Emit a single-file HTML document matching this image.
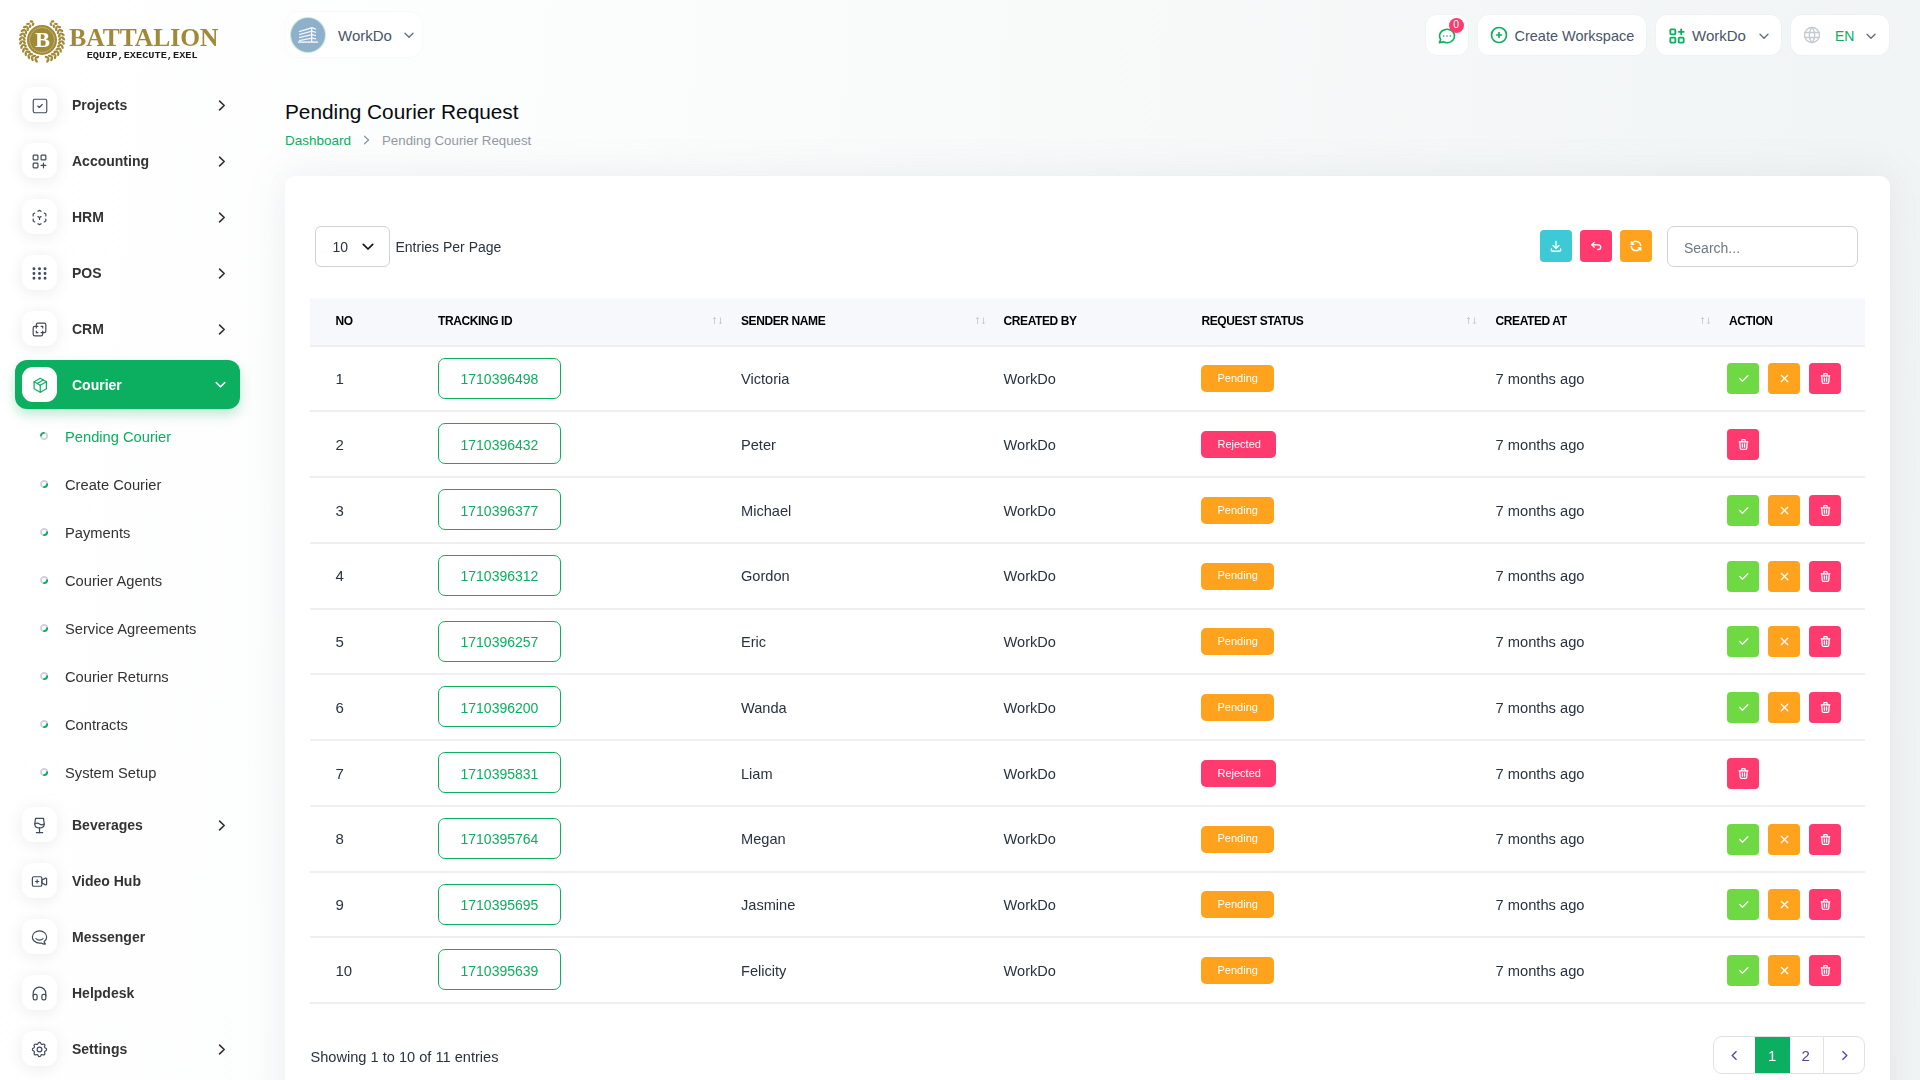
<!DOCTYPE html>
<html><head><meta charset="utf-8">
<style>
*{box-sizing:border-box;margin:0;padding:0}
html,body{width:1920px;height:1080px;overflow:hidden}
body{font-family:"Liberation Sans",sans-serif;color:#293240;background:linear-gradient(95deg,#ffffff 0%,#f9fbfb 45%,#f1f4f4 100%);position:relative}
.tx{position:absolute;white-space:nowrap;line-height:1}
.ic{position:absolute;overflow:visible}
.bx{position:absolute}
.nb{position:absolute;left:22px;width:35px;height:35px;border-radius:11px;background:#fff;box-shadow:0 2px 16px rgba(0,0,0,0.08)}
.nt{font-weight:bold;color:#333}
.st{color:#333}
.bul{position:absolute;left:40px;width:8px;height:8px;border-radius:50%;border:2px solid #cdd2db}
.hb{position:absolute;background:#fff;border-radius:11px;box-shadow:0 0 0 0.8px rgba(0,0,0,0.025)}
.rowl{position:absolute;left:310px;width:1555px;height:2px;background:#efefef}
.tid{position:absolute;left:438px;width:123px;height:41px;border:1.4px solid #0caf60;border-radius:7px}
.bdg{position:absolute;left:1201px;height:27px;border-radius:5px}
.ab{position:absolute;width:32px;height:31px;border-radius:4px}
.cg{background:#6fd943}.co{background:#ffa21d}.cr{background:#ff3a6e}.cc{background:#3ec9d6}
</style></head><body>
<div style="position:absolute;left:0;top:0;width:284px;height:1080px;will-change:transform">
<svg class="ic" style="left:0px;top:0px;width:240px;height:80px" viewBox="0 0 240 80"><g fill="#a08a37"><ellipse cx="36.13" cy="60.47" rx="2.50" ry="1.2" transform="rotate(236.0 36.13 60.47)"/><ellipse cx="37.01" cy="57.40" rx="2.50" ry="1.2" transform="rotate(156.0 37.01 57.40)"/><ellipse cx="32.26" cy="58.94" rx="2.50" ry="1.2" transform="rotate(247.2 32.26 58.94)"/><ellipse cx="33.73" cy="56.10" rx="2.50" ry="1.2" transform="rotate(167.2 33.73 56.10)"/><ellipse cx="28.77" cy="56.69" rx="2.50" ry="1.2" transform="rotate(258.4 28.77 56.69)"/><ellipse cx="30.76" cy="54.18" rx="2.50" ry="1.2" transform="rotate(178.4 30.76 54.18)"/><ellipse cx="25.78" cy="53.80" rx="2.50" ry="1.2" transform="rotate(269.6 25.78 53.80)"/><ellipse cx="28.22" cy="51.73" rx="2.50" ry="1.2" transform="rotate(189.6 28.22 51.73)"/><ellipse cx="23.41" cy="50.39" rx="2.50" ry="1.2" transform="rotate(280.8 23.41 50.39)"/><ellipse cx="26.20" cy="48.83" rx="2.50" ry="1.2" transform="rotate(200.8 26.20 48.83)"/><ellipse cx="21.74" cy="46.58" rx="2.50" ry="1.2" transform="rotate(292.0 21.74 46.58)"/><ellipse cx="24.79" cy="45.59" rx="2.50" ry="1.2" transform="rotate(212.0 24.79 45.59)"/><ellipse cx="20.85" cy="42.52" rx="2.50" ry="1.2" transform="rotate(303.2 20.85 42.52)"/><ellipse cx="24.03" cy="42.14" rx="2.50" ry="1.2" transform="rotate(223.2 24.03 42.14)"/><ellipse cx="20.76" cy="38.37" rx="2.50" ry="1.2" transform="rotate(314.4 20.76 38.37)"/><ellipse cx="23.95" cy="38.61" rx="2.50" ry="1.2" transform="rotate(234.4 23.95 38.61)"/><ellipse cx="21.48" cy="34.27" rx="2.50" ry="1.2" transform="rotate(325.6 21.48 34.27)"/><ellipse cx="24.57" cy="35.13" rx="2.50" ry="1.2" transform="rotate(245.6 24.57 35.13)"/><ellipse cx="22.99" cy="30.40" rx="2.50" ry="1.2" transform="rotate(336.8 22.99 30.40)"/><ellipse cx="25.84" cy="31.84" rx="2.50" ry="1.2" transform="rotate(256.8 25.84 31.84)"/><ellipse cx="25.22" cy="26.89" rx="2.50" ry="1.2" transform="rotate(348.0 25.22 26.89)"/><ellipse cx="27.74" cy="28.86" rx="2.50" ry="1.2" transform="rotate(268.0 27.74 28.86)"/><ellipse cx="28.08" cy="23.88" rx="1.90" ry="1.2" transform="rotate(359.2 28.08 23.88)"/><ellipse cx="30.17" cy="26.30" rx="1.90" ry="1.2" transform="rotate(279.2 30.17 26.30)"/><ellipse cx="31.48" cy="21.48" rx="1.90" ry="1.2" transform="rotate(370.4 31.48 21.48)"/><ellipse cx="33.06" cy="24.26" rx="1.90" ry="1.2" transform="rotate(290.4 33.06 24.26)"/><ellipse cx="47.87" cy="60.47" rx="2.50" ry="1.2" transform="rotate(-56.0 47.87 60.47)"/><ellipse cx="46.99" cy="57.40" rx="2.50" ry="1.2" transform="rotate(24.0 46.99 57.40)"/><ellipse cx="51.74" cy="58.94" rx="2.50" ry="1.2" transform="rotate(-67.2 51.74 58.94)"/><ellipse cx="50.27" cy="56.10" rx="2.50" ry="1.2" transform="rotate(12.8 50.27 56.10)"/><ellipse cx="55.23" cy="56.69" rx="2.50" ry="1.2" transform="rotate(-78.4 55.23 56.69)"/><ellipse cx="53.24" cy="54.18" rx="2.50" ry="1.2" transform="rotate(1.6 53.24 54.18)"/><ellipse cx="58.22" cy="53.80" rx="2.50" ry="1.2" transform="rotate(-89.6 58.22 53.80)"/><ellipse cx="55.78" cy="51.73" rx="2.50" ry="1.2" transform="rotate(-9.6 55.78 51.73)"/><ellipse cx="60.59" cy="50.39" rx="2.50" ry="1.2" transform="rotate(-100.8 60.59 50.39)"/><ellipse cx="57.80" cy="48.83" rx="2.50" ry="1.2" transform="rotate(-20.8 57.80 48.83)"/><ellipse cx="62.26" cy="46.58" rx="2.50" ry="1.2" transform="rotate(-112.0 62.26 46.58)"/><ellipse cx="59.21" cy="45.59" rx="2.50" ry="1.2" transform="rotate(-32.0 59.21 45.59)"/><ellipse cx="63.15" cy="42.52" rx="2.50" ry="1.2" transform="rotate(-123.2 63.15 42.52)"/><ellipse cx="59.97" cy="42.14" rx="2.50" ry="1.2" transform="rotate(-43.2 59.97 42.14)"/><ellipse cx="63.24" cy="38.37" rx="2.50" ry="1.2" transform="rotate(-134.4 63.24 38.37)"/><ellipse cx="60.05" cy="38.61" rx="2.50" ry="1.2" transform="rotate(-54.4 60.05 38.61)"/><ellipse cx="62.52" cy="34.27" rx="2.50" ry="1.2" transform="rotate(-145.6 62.52 34.27)"/><ellipse cx="59.43" cy="35.13" rx="2.50" ry="1.2" transform="rotate(-65.6 59.43 35.13)"/><ellipse cx="61.01" cy="30.40" rx="2.50" ry="1.2" transform="rotate(-156.8 61.01 30.40)"/><ellipse cx="58.16" cy="31.84" rx="2.50" ry="1.2" transform="rotate(-76.8 58.16 31.84)"/><ellipse cx="58.78" cy="26.89" rx="2.50" ry="1.2" transform="rotate(-168.0 58.78 26.89)"/><ellipse cx="56.26" cy="28.86" rx="2.50" ry="1.2" transform="rotate(-88.0 56.26 28.86)"/><ellipse cx="55.92" cy="23.88" rx="1.90" ry="1.2" transform="rotate(-179.2 55.92 23.88)"/><ellipse cx="53.83" cy="26.30" rx="1.90" ry="1.2" transform="rotate(-99.2 53.83 26.30)"/><ellipse cx="52.52" cy="21.48" rx="1.90" ry="1.2" transform="rotate(-190.4 52.52 21.48)"/><ellipse cx="50.94" cy="24.26" rx="1.90" ry="1.2" transform="rotate(-110.4 50.94 24.26)"/></g><circle cx="42" cy="40" r="15" fill="#a08a37"/><circle cx="42" cy="40" r="12.4" fill="none" stroke="#efe6c8" stroke-width="0.6" stroke-dasharray="1.6 0.6"/><text x="42.6" y="46.6" font-family="Liberation Serif" font-weight="bold" font-size="20.5" fill="#fff" text-anchor="middle" textLength="15" lengthAdjust="spacingAndGlyphs">B</text><text x="69.2" y="45.9" font-family="Liberation Serif" font-weight="bold" font-size="25.5" fill="#a08a37" textLength="149.3" lengthAdjust="spacingAndGlyphs">BATTALION</text><text x="86.7" y="58.2" font-family="Liberation Mono" font-weight="bold" font-size="9.6" fill="#1c1c1c" textLength="111" lengthAdjust="spacingAndGlyphs">EQUIP,EXECUTE,EXEL</text></svg>
<div class="nb" style="top:86.75px"></div>
<svg class="ic" style="left:30.700000000000003px;top:96.5px;width:18px;height:18px;" viewBox="0 0 24 24" fill="none" stroke="#3f4a5a" stroke-width="1.5" stroke-linecap="round" stroke-linejoin="round"><path d="M3 5a2 2 0 0 1 2 -2h14a2 2 0 0 1 2 2v14a2 2 0 0 1 -2 2h-14a2 2 0 0 1 -2 -2v-14z"/><path d="M9 12l2 2l4 -4"/></svg>
<div class="tx nt" style="left:72px;top:97.65px;font-size:14px;">Projects</div>
<svg class="ic" style="left:218px;top:99.7px;width:8px;height:11px" viewBox="0 0 8 11"><path d="M1.6 1.2l4.6 4.3-4.6 4.3" fill="none" stroke="#333" stroke-width="1.7" stroke-linecap="round" stroke-linejoin="round"/></svg>
<div class="nb" style="top:142.75px"></div>
<svg class="ic" style="left:30.200000000000003px;top:152.0px;width:19px;height:19px;" viewBox="0 0 24 24" fill="none" stroke="#3f4a5a" stroke-width="1.5" stroke-linecap="round" stroke-linejoin="round"><path d="M5 4h4a1 1 0 0 1 1 1v4a1 1 0 0 1 -1 1h-4a1 1 0 0 1 -1 -1v-4a1 1 0 0 1 1 -1z"/><path d="M5 14h4a1 1 0 0 1 1 1v4a1 1 0 0 1 -1 1h-4a1 1 0 0 1 -1 -1v-4a1 1 0 0 1 1 -1z"/><path d="M15 4h4a1 1 0 0 1 1 1v4a1 1 0 0 1 -1 1h-4a1 1 0 0 1 -1 -1v-4a1 1 0 0 1 1 -1z"/><path d="M14 17h6"/><path d="M17 14v6"/></svg>
<div class="tx nt" style="left:72px;top:153.65px;font-size:14px;">Accounting</div>
<svg class="ic" style="left:218px;top:155.7px;width:8px;height:11px" viewBox="0 0 8 11"><path d="M1.6 1.2l4.6 4.3-4.6 4.3" fill="none" stroke="#333" stroke-width="1.7" stroke-linecap="round" stroke-linejoin="round"/></svg>
<div class="nb" style="top:198.75px"></div>
<svg class="ic" style="left:30.200000000000003px;top:208.0px;width:19px;height:19px;" viewBox="0 0 24 24" fill="none" stroke="#3f4a5a" stroke-width="1.5" stroke-linecap="round" stroke-linejoin="round"><path d="M6 17.6l-2 -1.1v-2.5"/><path d="M4 10v-2.5l2 -1.1"/><path d="M10 4.1l2 -1.1l2 1.1"/><path d="M18 6.4l2 1.1v2.5"/><path d="M20 14v2.5l-2 1.12"/><path d="M14 19.9l-2 1.1l-2 -1.1"/><path d="M12 12l2 -1.1"/><path d="M12 12l0 2.5"/><path d="M12 12l-2 -1.12"/></svg>
<div class="tx nt" style="left:72px;top:209.65px;font-size:14px;">HRM</div>
<svg class="ic" style="left:218px;top:211.7px;width:8px;height:11px" viewBox="0 0 8 11"><path d="M1.6 1.2l4.6 4.3-4.6 4.3" fill="none" stroke="#333" stroke-width="1.7" stroke-linecap="round" stroke-linejoin="round"/></svg>
<div class="nb" style="top:254.75px"></div>
<svg class="ic" style="left:30.200000000000003px;top:264.0px;width:19px;height:19px;" viewBox="0 0 24 24" fill="none" stroke="#3f4a5a" stroke-width="1.5" stroke-linecap="round" stroke-linejoin="round"><circle cx="5" cy="6" r="1.1" fill="#3f4a5a"/><circle cx="5" cy="12" r="1.1" fill="#3f4a5a"/><circle cx="5" cy="18" r="1.1" fill="#3f4a5a"/><circle cx="12" cy="6" r="1.1" fill="#3f4a5a"/><circle cx="12" cy="12" r="1.1" fill="#3f4a5a"/><circle cx="12" cy="18" r="1.1" fill="#3f4a5a"/><circle cx="19" cy="6" r="1.1" fill="#3f4a5a"/><circle cx="19" cy="12" r="1.1" fill="#3f4a5a"/><circle cx="19" cy="18" r="1.1" fill="#3f4a5a"/></svg>
<div class="tx nt" style="left:72px;top:265.65px;font-size:14px;">POS</div>
<svg class="ic" style="left:218px;top:267.7px;width:8px;height:11px" viewBox="0 0 8 11"><path d="M1.6 1.2l4.6 4.3-4.6 4.3" fill="none" stroke="#333" stroke-width="1.7" stroke-linecap="round" stroke-linejoin="round"/></svg>
<div class="nb" style="top:310.75px"></div>
<svg class="ic" style="left:30.200000000000003px;top:320.0px;width:19px;height:19px;" viewBox="0 0 24 24" fill="none" stroke="#3f4a5a" stroke-width="1.5" stroke-linecap="round" stroke-linejoin="round"><path d="M16 16v2a2 2 0 0 1 -2 2h-8a2 2 0 0 1 -2 -2v-8a2 2 0 0 1 2 -2h2v-2a2 2 0 0 1 2 -2h8a2 2 0 0 1 2 2v8a2 2 0 0 1 -2 2h-2"/><path d="M10 8l-2 0l0 2"/><path d="M8 14l0 2l2 0"/><path d="M14 8l2 0l0 2"/><path d="M16 14l0 2l-2 0"/></svg>
<div class="tx nt" style="left:72px;top:321.65px;font-size:14px;">CRM</div>
<svg class="ic" style="left:218px;top:323.7px;width:8px;height:11px" viewBox="0 0 8 11"><path d="M1.6 1.2l4.6 4.3-4.6 4.3" fill="none" stroke="#333" stroke-width="1.7" stroke-linecap="round" stroke-linejoin="round"/></svg>
<div class="bx" style="left:15px;top:360px;width:225px;height:49px;border-radius:12px;background:#0caf60;box-shadow:0 6px 12px rgba(12,175,96,0.25)"></div>
<div class="nb" style="top:367px;box-shadow:none"></div>
<svg class="ic" style="left:30.5px;top:376px;width:18.5px;height:18.5px;" viewBox="0 0 24 24" fill="none" stroke="#0caf60" stroke-width="1.6" stroke-linecap="round" stroke-linejoin="round"><path d="M12 3l8 4.5l0 9l-8 4.5l-8 -4.5l0 -9l8 -4.5"/><path d="M12 12l8 -4.5"/><path d="M12 12l0 9"/><path d="M12 12l-8 -4.5"/><path d="M16 5.25l-8 4.5"/></svg>
<div class="tx nt" style="left:72px;top:377.75px;font-size:14px;color:#fff">Courier</div>
<svg class="ic" style="left:215px;top:381px;width:11px;height:8px" viewBox="0 0 11 8"><path d="M1.2 1.5l4.3 4.3 4.3-4.3" fill="none" stroke="#fff" stroke-width="1.6" stroke-linecap="round" stroke-linejoin="round"/></svg>
<svg class="ic" style="left:39px;top:431px;width:10px;height:10px" viewBox="0 0 10 10"><circle cx="5" cy="5" r="3.1" fill="none" stroke="#cdd1da" stroke-width="1.8"/><path d="M1.95 4.46A3.1 3.1 0 0 1 4.89 1.90" fill="none" stroke="#0caf60" stroke-width="1.9" stroke-linecap="round"/></svg>
<div class="tx st" style="left:65px;top:429.66px;font-size:14.7px;color:#0caf60">Pending Courier</div>
<svg class="ic" style="left:39px;top:479px;width:10px;height:10px" viewBox="0 0 10 10"><circle cx="5" cy="5" r="3.1" fill="none" stroke="#cdd1da" stroke-width="1.8"/><path d="M8.10 5.11A3.1 3.1 0 0 1 5.11 8.10" fill="none" stroke="#0caf60" stroke-width="1.9" stroke-linecap="round"/></svg>
<div class="tx st" style="left:65px;top:477.66px;font-size:14.7px;">Create Courier</div>
<svg class="ic" style="left:39px;top:527px;width:10px;height:10px" viewBox="0 0 10 10"><circle cx="5" cy="5" r="3.1" fill="none" stroke="#cdd1da" stroke-width="1.8"/><path d="M8.10 5.11A3.1 3.1 0 0 1 5.11 8.10" fill="none" stroke="#0caf60" stroke-width="1.9" stroke-linecap="round"/></svg>
<div class="tx st" style="left:65px;top:525.66px;font-size:14.7px;">Payments</div>
<svg class="ic" style="left:39px;top:575px;width:10px;height:10px" viewBox="0 0 10 10"><circle cx="5" cy="5" r="3.1" fill="none" stroke="#cdd1da" stroke-width="1.8"/><path d="M8.10 5.11A3.1 3.1 0 0 1 5.11 8.10" fill="none" stroke="#0caf60" stroke-width="1.9" stroke-linecap="round"/></svg>
<div class="tx st" style="left:65px;top:573.66px;font-size:14.7px;">Courier Agents</div>
<svg class="ic" style="left:39px;top:623px;width:10px;height:10px" viewBox="0 0 10 10"><circle cx="5" cy="5" r="3.1" fill="none" stroke="#cdd1da" stroke-width="1.8"/><path d="M8.10 5.11A3.1 3.1 0 0 1 5.11 8.10" fill="none" stroke="#0caf60" stroke-width="1.9" stroke-linecap="round"/></svg>
<div class="tx st" style="left:65px;top:621.66px;font-size:14.7px;">Service Agreements</div>
<svg class="ic" style="left:39px;top:671px;width:10px;height:10px" viewBox="0 0 10 10"><circle cx="5" cy="5" r="3.1" fill="none" stroke="#cdd1da" stroke-width="1.8"/><path d="M8.10 5.11A3.1 3.1 0 0 1 5.11 8.10" fill="none" stroke="#0caf60" stroke-width="1.9" stroke-linecap="round"/></svg>
<div class="tx st" style="left:65px;top:669.66px;font-size:14.7px;">Courier Returns</div>
<svg class="ic" style="left:39px;top:719px;width:10px;height:10px" viewBox="0 0 10 10"><circle cx="5" cy="5" r="3.1" fill="none" stroke="#cdd1da" stroke-width="1.8"/><path d="M8.10 5.11A3.1 3.1 0 0 1 5.11 8.10" fill="none" stroke="#0caf60" stroke-width="1.9" stroke-linecap="round"/></svg>
<div class="tx st" style="left:65px;top:717.66px;font-size:14.7px;">Contracts</div>
<svg class="ic" style="left:39px;top:767px;width:10px;height:10px" viewBox="0 0 10 10"><circle cx="5" cy="5" r="3.1" fill="none" stroke="#cdd1da" stroke-width="1.8"/><path d="M8.10 5.11A3.1 3.1 0 0 1 5.11 8.10" fill="none" stroke="#0caf60" stroke-width="1.9" stroke-linecap="round"/></svg>
<div class="tx st" style="left:65px;top:765.66px;font-size:14.7px;">System Setup</div>
<div class="nb" style="top:806.75px"></div>
<svg class="ic" style="left:30.200000000000003px;top:816.0px;width:19px;height:19px;" viewBox="0 0 24 24" fill="none" stroke="#3f4a5a" stroke-width="1.5" stroke-linecap="round" stroke-linejoin="round"><path d="M8 21l8 0"/><path d="M12 15l0 6"/><path d="M17 3l1 7c0 3.012 -2.686 5 -6 5s-6 -1.988 -6 -5l1 -7h10z"/><path d="M6 10a5 5 0 0 1 6 0a5 5 0 0 0 6 0"/></svg>
<div class="tx nt" style="left:72px;top:817.65px;font-size:14px;">Beverages</div>
<svg class="ic" style="left:218px;top:819.7px;width:8px;height:11px" viewBox="0 0 8 11"><path d="M1.6 1.2l4.6 4.3-4.6 4.3" fill="none" stroke="#333" stroke-width="1.7" stroke-linecap="round" stroke-linejoin="round"/></svg>
<div class="nb" style="top:862.75px"></div>
<svg class="ic" style="left:30.200000000000003px;top:872.0px;width:19px;height:19px;" viewBox="0 0 24 24" fill="none" stroke="#3f4a5a" stroke-width="1.5" stroke-linecap="round" stroke-linejoin="round"><path d="M15 10l4.553 -2.276a1 1 0 0 1 1.447 .894v6.764a1 1 0 0 1 -1.447 .894l-4.553 -2.276v-4z"/><path d="M5 6h8a2 2 0 0 1 2 2v8a2 2 0 0 1 -2 2h-8a2 2 0 0 1 -2 -2v-8a2 2 0 0 1 2 -2z"/><path d="M7 12l4 0"/><path d="M9 10l0 4"/></svg>
<div class="tx nt" style="left:72px;top:873.65px;font-size:14px;">Video Hub</div>
<div class="nb" style="top:918.75px"></div>
<svg class="ic" style="left:30.200000000000003px;top:928.0px;width:19px;height:19px;" viewBox="0 0 24 24" fill="none" stroke="#3f4a5a" stroke-width="1.5" stroke-linecap="round" stroke-linejoin="round"><path d="M17.802 17.292s.077 -.055 .2 -.149c1.843 -1.425 3 -3.49 3 -5.789c0 -4.286 -4.03 -7.764 -9 -7.764c-4.97 0 -9 3.478 -9 7.764c0 4.288 4.03 7.646 9 7.646c.424 0 1.12 -.028 2.088 -.084c1.262 .82 3.104 1.493 4.716 1.493c.499 0 .734 -.41 .414 -.828c-.486 -.596 -1.156 -1.551 -1.416 -2.29z"/><path d="M7.5 13.5c2.5 2.5 6.5 2.5 9 0"/></svg>
<div class="tx nt" style="left:72px;top:929.65px;font-size:14px;">Messenger</div>
<div class="nb" style="top:974.75px"></div>
<svg class="ic" style="left:30.200000000000003px;top:984.0px;width:19px;height:19px;" viewBox="0 0 24 24" fill="none" stroke="#3f4a5a" stroke-width="1.5" stroke-linecap="round" stroke-linejoin="round"><path d="M6 13h1a2 2 0 0 1 2 2v3a2 2 0 0 1 -2 2h-1a2 2 0 0 1 -2 -2v-3a2 2 0 0 1 2 -2z"/><path d="M17 13h1a2 2 0 0 1 2 2v3a2 2 0 0 1 -2 2h-1a2 2 0 0 1 -2 -2v-3a2 2 0 0 1 2 -2z"/><path d="M4 15v-3a8 8 0 0 1 16 0v3"/></svg>
<div class="tx nt" style="left:72px;top:985.65px;font-size:14px;">Helpdesk</div>
<div class="nb" style="top:1030.75px"></div>
<svg class="ic" style="left:30.200000000000003px;top:1040.0px;width:19px;height:19px;" viewBox="0 0 24 24" fill="none" stroke="#3f4a5a" stroke-width="1.5" stroke-linecap="round" stroke-linejoin="round"><path d="M10.325 4.317c.426 -1.756 2.924 -1.756 3.35 0a1.724 1.724 0 0 0 2.573 1.066c1.543 -.94 3.31 .826 2.37 2.37a1.724 1.724 0 0 0 1.065 2.572c1.756 .426 1.756 2.924 0 3.35a1.724 1.724 0 0 0 -1.066 2.573c.94 1.543 -.826 3.31 -2.37 2.37a1.724 1.724 0 0 0 -2.572 1.065c-.426 1.756 -2.924 1.756 -3.35 0a1.724 1.724 0 0 0 -2.573 -1.066c-1.543 .94 -3.31 -.826 -2.37 -2.37a1.724 1.724 0 0 0 -1.065 -2.572c-1.756 -.426 -1.756 -2.924 0 -3.35a1.724 1.724 0 0 0 1.066 -2.573c-.94 -1.543 .826 -3.31 2.37 -2.37c1 .608 2.296 .07 2.572 -1.065z"/><path d="M9 12a3 3 0 1 0 6 0a3 3 0 0 0 -6 0"/></svg>
<div class="tx nt" style="left:72px;top:1041.65px;font-size:14px;">Settings</div>
<svg class="ic" style="left:218px;top:1043.7px;width:8px;height:11px" viewBox="0 0 8 11"><path d="M1.6 1.2l4.6 4.3-4.6 4.3" fill="none" stroke="#333" stroke-width="1.7" stroke-linecap="round" stroke-linejoin="round"/></svg>
</div>
<div class="hb" style="left:285.5px;top:12.4px;width:136px;height:45px;border-radius:12px"></div>
<div class="bx" style="left:291px;top:18px;width:34px;height:34px;border-radius:50%;background:#8eb0cb;box-shadow:0 0 0 1px #cdebd9"></div>
<svg class="ic" style="left:297px;top:25px;width:22px;height:19px" viewBox="0 0 22 19"><g fill="#f4f7fa"><path d="M2 6l13-4 4 1.5v1.2l-4-1.2-13 3.8z"/><path d="M2 9l13-3.5 4 1.2v1.2l-4-1.1-13 3.4z"/><path d="M2 12l13-3 4 1v1.2l-4-0.9-13 2.9z"/><path d="M2 15l13-2.5 4 0.8v1.2l-4-0.7-13 2.4z"/><rect x="14" y="3" width="1.3" height="14"/><rect x="1" y="16.4" width="20" height="1.4"/></g></svg>
<div class="tx " style="left:338px;top:28.10px;font-size:15px;color:#4a5568">WorkDo</div>
<svg class="ic" style="left:404px;top:32px;width:10px;height:7px" viewBox="0 0 10 7"><path d="M1 1.3l4 4 4-4" fill="none" stroke="#5f6b7a" stroke-width="1.3" stroke-linecap="round" stroke-linejoin="round"/></svg>
<div class="hb" style="left:1426px;top:15px;width:42px;height:40px"></div>
<svg class="ic" style="left:1437px;top:26px;width:20px;height:20px" viewBox="0 0 24 24" fill="none" stroke="#0caf60" stroke-width="2" stroke-linecap="round" stroke-linejoin="round"><path d="M3 20l1.3 -3.9c-2.324 -3.437 -1.426 -7.872 2.1 -10.374c3.526 -2.501 8.59 -2.296 11.845 .48c3.255 2.777 3.695 7.266 1.029 10.501c-2.666 3.235 -7.615 4.215 -11.574 2.293l-4.7 1"/><path d="M12 12l0 .01"/><path d="M8 12l0 .01"/><path d="M16 12l0 .01"/></svg>
<div class="bx" style="left:1449px;top:17.5px;width:15px;height:15px;border-radius:50%;background:#ff3a6e"></div>
<div class="tx " style="left:1453.2px;top:19.11px;font-size:10.5px;color:#fff">0</div>
<div class="hb" style="left:1478px;top:15px;width:168px;height:40px"></div>
<svg class="ic" style="left:1489px;top:25px;width:20px;height:20px" viewBox="0 0 24 24" fill="none" stroke="#0caf60" stroke-width="2" stroke-linecap="round" stroke-linejoin="round"><path d="M3 12a9 9 0 1 0 18 0a9 9 0 0 0 -18 0"/><path d="M9 12h6"/><path d="M12 9v6"/></svg>
<div class="tx " style="left:1514.5px;top:29.23px;font-size:14.5px;color:#4a5568">Create Workspace</div>
<div class="hb" style="left:1656px;top:15px;width:125px;height:40px"></div>
<svg class="ic" style="left:1667px;top:26px;width:20px;height:20px" viewBox="0 0 24 24" fill="none" stroke="#0caf60" stroke-width="2.2" stroke-linecap="round" stroke-linejoin="round"><path d="M5 4h4a1 1 0 0 1 1 1v4a1 1 0 0 1 -1 1h-4a1 1 0 0 1 -1 -1v-4a1 1 0 0 1 1 -1z"/><path d="M5 14h4a1 1 0 0 1 1 1v4a1 1 0 0 1 -1 1h-4a1 1 0 0 1 -1 -1v-4a1 1 0 0 1 1 -1z"/><path d="M15 14h4a1 1 0 0 1 1 1v4a1 1 0 0 1 -1 1h-4a1 1 0 0 1 -1 -1v-4a1 1 0 0 1 1 -1z"/><path d="M14 7h6"/><path d="M17 4v6"/></svg>
<div class="tx " style="left:1692px;top:28.20px;font-size:15px;color:#4a5568">WorkDo</div>
<svg class="ic" style="left:1758.5px;top:32.5px;width:10px;height:7px" viewBox="0 0 10 7"><path d="M1 1.3l4 4 4-4" fill="none" stroke="#5f6b7a" stroke-width="1.3" stroke-linecap="round" stroke-linejoin="round"/></svg>
<div class="hb" style="left:1791px;top:15px;width:98px;height:40px"></div>
<svg class="ic" style="left:1801.5px;top:25px;width:20px;height:20px" viewBox="0 0 24 24" fill="none" stroke="#c5c9d0" stroke-width="1.6" stroke-linecap="round" stroke-linejoin="round"><path d="M3 12a9 9 0 1 0 18 0a9 9 0 0 0 -18 0"/><path d="M3.6 9h16.8"/><path d="M3.6 15h16.8"/><path d="M11.5 3a17 17 0 0 0 0 18"/><path d="M12.5 3a17 17 0 0 1 0 18"/></svg>
<div class="tx " style="left:1835px;top:28.65px;font-size:14px;color:#0caf60">EN</div>
<svg class="ic" style="left:1866px;top:32.5px;width:10px;height:7px" viewBox="0 0 10 7"><path d="M1 1.3l4 4 4-4" fill="none" stroke="#5f6b7a" stroke-width="1.3" stroke-linecap="round" stroke-linejoin="round"/></svg>
<div class="tx " style="left:285px;top:101.99px;font-size:20.8px;color:#060a10">Pending Courier Request</div>
<div class="tx " style="left:285px;top:133.97px;font-size:13.5px;color:#0caf60">Dashboard</div>
<svg class="ic" style="left:363px;top:135px;width:7px;height:10px" viewBox="0 0 7 10"><path d="M1.5 1.2l4 3.8-4 3.8" fill="none" stroke="#8a929c" stroke-width="1.2" stroke-linecap="round" stroke-linejoin="round"/></svg>
<div class="tx " style="left:382px;top:134.14px;font-size:13.3px;color:#949aa2">Pending Courier Request</div>
<div class="bx" style="left:285px;top:176px;width:1605px;height:1000px;background:#fff;border-radius:10px;box-shadow:0 0 40px rgba(120,130,150,0.13)"></div>
<div class="bx" style="left:315px;top:226px;width:75px;height:41px;border:1px solid #ced3da;border-radius:6px"></div>
<div class="tx " style="left:332.5px;top:240.15px;font-size:14px;color:#293240">10</div>
<svg class="ic" style="left:362px;top:242.5px;width:12px;height:8px" viewBox="0 0 12 8"><path d="M1.3 1.3l4.7 4.7 4.7-4.7" fill="none" stroke="#111" stroke-width="1.7" stroke-linecap="round" stroke-linejoin="round"/></svg>
<div class="tx " style="left:395.5px;top:240.15px;font-size:14px;color:#293240">Entries Per Page</div>
<div class="bx cc" style="left:1540px;top:230px;width:32px;height:32px;border-radius:4px"></div>
<svg class="ic" style="left:1549px;top:239px;width:14px;height:14px" viewBox="0 0 24 24" fill="none" stroke="#fff" stroke-width="2.4" stroke-linecap="round" stroke-linejoin="round"><path d="M4 17v2a2 2 0 0 0 2 2h12a2 2 0 0 0 2 -2v-2"/><path d="M7 11l5 5l5 -5"/><path d="M12 4l0 12"/></svg>
<div class="bx cr" style="left:1580px;top:230px;width:32px;height:32px;border-radius:4px"></div>
<svg class="ic" style="left:1589px;top:239px;width:14px;height:14px" viewBox="0 0 24 24" fill="none" stroke="#fff" stroke-width="2.4" stroke-linecap="round" stroke-linejoin="round"><path d="M9 14l-4 -4l4 -4"/><path d="M5 10h11a4 4 0 1 1 0 8h-1"/></svg>
<div class="bx co" style="left:1620px;top:230px;width:32px;height:32px;border-radius:4px"></div>
<svg class="ic" style="left:1629px;top:239px;width:14px;height:14px" viewBox="0 0 24 24" fill="none" stroke="#fff" stroke-width="2.6" stroke-linecap="round" stroke-linejoin="round"><path d="M20 11a8.1 8.1 0 0 0 -15.5 -2m-.5 -4v4h4"/><path d="M4 13a8.1 8.1 0 0 0 15.5 2m.5 4v-4h-4"/></svg>
<div class="bx" style="left:1667px;top:226px;width:191px;height:41px;border:1px solid #ced3da;border-radius:7px"></div>
<div class="tx " style="left:1684px;top:240.55px;font-size:14px;color:#6e7885">Search...</div>
<div class="bx" style="left:310px;top:298px;width:1555px;height:47px;background:#f7f8fc"></div>
<div class="rowl" style="top:345px"></div>
<div class="tx " style="left:335.5px;top:314.84px;font-size:12px;font-weight:bold;letter-spacing:-0.4px;color:#000">NO</div>
<div class="tx " style="left:438px;top:314.84px;font-size:12px;font-weight:bold;letter-spacing:-0.4px;color:#000">TRACKING ID</div>
<div class="tx " style="left:741px;top:314.84px;font-size:12px;font-weight:bold;letter-spacing:-0.4px;color:#000">SENDER NAME</div>
<div class="tx " style="left:1003.5px;top:314.84px;font-size:12px;font-weight:bold;letter-spacing:-0.4px;color:#000">CREATED BY</div>
<div class="tx " style="left:1201.5px;top:314.84px;font-size:12px;font-weight:bold;letter-spacing:-0.4px;color:#000">REQUEST STATUS</div>
<div class="tx " style="left:1495.5px;top:314.84px;font-size:12px;font-weight:bold;letter-spacing:-0.4px;color:#000">CREATED AT</div>
<div class="tx " style="left:1729px;top:314.84px;font-size:12px;font-weight:bold;letter-spacing:-0.4px;color:#000">ACTION</div>
<svg class="ic" style="left:712px;top:315px;width:11px;height:10px" viewBox="0 0 11 10"><path d="M2.5 9V2.5M1 4l1.5-1.5L4 4M8.5 2.5v6.5M7 7.5l1.5 1.5L10 7.5" fill="none" stroke="#c3c7ce" stroke-width="0.85"/></svg>
<svg class="ic" style="left:975px;top:315px;width:11px;height:10px" viewBox="0 0 11 10"><path d="M2.5 9V2.5M1 4l1.5-1.5L4 4M8.5 2.5v6.5M7 7.5l1.5 1.5L10 7.5" fill="none" stroke="#c3c7ce" stroke-width="0.85"/></svg>
<svg class="ic" style="left:1466px;top:315px;width:11px;height:10px" viewBox="0 0 11 10"><path d="M2.5 9V2.5M1 4l1.5-1.5L4 4M8.5 2.5v6.5M7 7.5l1.5 1.5L10 7.5" fill="none" stroke="#c3c7ce" stroke-width="0.85"/></svg>
<svg class="ic" style="left:1700px;top:315px;width:11px;height:10px" viewBox="0 0 11 10"><path d="M2.5 9V2.5M1 4l1.5-1.5L4 4M8.5 2.5v6.5M7 7.5l1.5 1.5L10 7.5" fill="none" stroke="#c3c7ce" stroke-width="0.85"/></svg>
<div class="rowl" style="top:410px"></div>
<div class="tx " style="left:335.5px;top:371.40px;font-size:15px;">1</div>
<div class="tid" style="top:357.7px"></div>
<div class="tx " style="left:460.5px;top:372.25px;font-size:14px;color:#0caf60">1710396498</div>
<div class="tx " style="left:741px;top:371.74px;font-size:14.6px;">Victoria</div>
<div class="tx " style="left:1003.5px;top:371.74px;font-size:14.6px;">WorkDo</div>
<div class="bdg co" style="top:365.0px;width:73px"></div>
<div class="tx " style="left:1217.5px;top:372.79px;font-size:11px;color:#fff">Pending</div>
<div class="tx " style="left:1495.5px;top:371.66px;font-size:14.7px;">7 months ago</div>
<div class="ab cg" style="left:1727px;top:363.0px"></div>
<svg class="ic" style="left:1736.5px;top:372.0px;width:13px;height:13px" viewBox="0 0 24 24" fill="none" stroke="#fff" stroke-width="2.4" stroke-linecap="round" stroke-linejoin="round"><path d="M5 12l5 5l10 -10"/></svg>
<div class="ab co" style="left:1768px;top:363.0px"></div>
<svg class="ic" style="left:1777.5px;top:372.0px;width:13px;height:13px" viewBox="0 0 24 24" fill="none" stroke="#fff" stroke-width="2.2" stroke-linecap="round" stroke-linejoin="round"><path d="M18 6l-12 12"/><path d="M6 6l12 12"/></svg>
<div class="ab cr" style="left:1809px;top:363.0px"></div>
<svg class="ic" style="left:1818.5px;top:372.0px;width:13px;height:13px" viewBox="0 0 24 24" fill="none" stroke="#fff" stroke-width="2.4" stroke-linecap="round" stroke-linejoin="round"><path d="M4 7l16 0"/><path d="M10 11l0 6"/><path d="M14 11l0 6"/><path d="M5 7l1 12a2 2 0 0 0 2 2h8a2 2 0 0 0 2 -2l1 -12"/><path d="M9 7v-3a1 1 0 0 1 1 -1h4a1 1 0 0 1 1 1v3"/></svg>
<div class="rowl" style="top:476px"></div>
<div class="tx " style="left:335.5px;top:437.40px;font-size:15px;">2</div>
<div class="tid" style="top:423.2px"></div>
<div class="tx " style="left:460.5px;top:438.25px;font-size:14px;color:#0caf60">1710396432</div>
<div class="tx " style="left:741px;top:437.74px;font-size:14.6px;">Peter</div>
<div class="tx " style="left:1003.5px;top:437.74px;font-size:14.6px;">WorkDo</div>
<div class="bdg cr" style="top:430.5px;width:75px"></div>
<div class="tx " style="left:1217.5px;top:438.79px;font-size:11px;color:#fff">Rejected</div>
<div class="tx " style="left:1495.5px;top:437.66px;font-size:14.7px;">7 months ago</div>
<div class="ab cr" style="left:1727px;top:428.5px"></div>
<svg class="ic" style="left:1736.5px;top:437.5px;width:13px;height:13px" viewBox="0 0 24 24" fill="none" stroke="#fff" stroke-width="2.4" stroke-linecap="round" stroke-linejoin="round"><path d="M4 7l16 0"/><path d="M10 11l0 6"/><path d="M14 11l0 6"/><path d="M5 7l1 12a2 2 0 0 0 2 2h8a2 2 0 0 0 2 -2l1 -12"/><path d="M9 7v-3a1 1 0 0 1 1 -1h4a1 1 0 0 1 1 1v3"/></svg>
<div class="rowl" style="top:542px"></div>
<div class="tx " style="left:335.5px;top:503.40px;font-size:15px;">3</div>
<div class="tid" style="top:489.2px"></div>
<div class="tx " style="left:460.5px;top:504.25px;font-size:14px;color:#0caf60">1710396377</div>
<div class="tx " style="left:741px;top:503.74px;font-size:14.6px;">Michael</div>
<div class="tx " style="left:1003.5px;top:503.74px;font-size:14.6px;">WorkDo</div>
<div class="bdg co" style="top:496.5px;width:73px"></div>
<div class="tx " style="left:1217.5px;top:504.79px;font-size:11px;color:#fff">Pending</div>
<div class="tx " style="left:1495.5px;top:503.66px;font-size:14.7px;">7 months ago</div>
<div class="ab cg" style="left:1727px;top:494.5px"></div>
<svg class="ic" style="left:1736.5px;top:503.5px;width:13px;height:13px" viewBox="0 0 24 24" fill="none" stroke="#fff" stroke-width="2.4" stroke-linecap="round" stroke-linejoin="round"><path d="M5 12l5 5l10 -10"/></svg>
<div class="ab co" style="left:1768px;top:494.5px"></div>
<svg class="ic" style="left:1777.5px;top:503.5px;width:13px;height:13px" viewBox="0 0 24 24" fill="none" stroke="#fff" stroke-width="2.2" stroke-linecap="round" stroke-linejoin="round"><path d="M18 6l-12 12"/><path d="M6 6l12 12"/></svg>
<div class="ab cr" style="left:1809px;top:494.5px"></div>
<svg class="ic" style="left:1818.5px;top:503.5px;width:13px;height:13px" viewBox="0 0 24 24" fill="none" stroke="#fff" stroke-width="2.4" stroke-linecap="round" stroke-linejoin="round"><path d="M4 7l16 0"/><path d="M10 11l0 6"/><path d="M14 11l0 6"/><path d="M5 7l1 12a2 2 0 0 0 2 2h8a2 2 0 0 0 2 -2l1 -12"/><path d="M9 7v-3a1 1 0 0 1 1 -1h4a1 1 0 0 1 1 1v3"/></svg>
<div class="rowl" style="top:608px"></div>
<div class="tx " style="left:335.5px;top:568.40px;font-size:15px;">4</div>
<div class="tid" style="top:555.2px"></div>
<div class="tx " style="left:460.5px;top:569.25px;font-size:14px;color:#0caf60">1710396312</div>
<div class="tx " style="left:741px;top:568.74px;font-size:14.6px;">Gordon</div>
<div class="tx " style="left:1003.5px;top:568.74px;font-size:14.6px;">WorkDo</div>
<div class="bdg co" style="top:562.5px;width:73px"></div>
<div class="tx " style="left:1217.5px;top:569.79px;font-size:11px;color:#fff">Pending</div>
<div class="tx " style="left:1495.5px;top:568.66px;font-size:14.7px;">7 months ago</div>
<div class="ab cg" style="left:1727px;top:560.5px"></div>
<svg class="ic" style="left:1736.5px;top:569.5px;width:13px;height:13px" viewBox="0 0 24 24" fill="none" stroke="#fff" stroke-width="2.4" stroke-linecap="round" stroke-linejoin="round"><path d="M5 12l5 5l10 -10"/></svg>
<div class="ab co" style="left:1768px;top:560.5px"></div>
<svg class="ic" style="left:1777.5px;top:569.5px;width:13px;height:13px" viewBox="0 0 24 24" fill="none" stroke="#fff" stroke-width="2.2" stroke-linecap="round" stroke-linejoin="round"><path d="M18 6l-12 12"/><path d="M6 6l12 12"/></svg>
<div class="ab cr" style="left:1809px;top:560.5px"></div>
<svg class="ic" style="left:1818.5px;top:569.5px;width:13px;height:13px" viewBox="0 0 24 24" fill="none" stroke="#fff" stroke-width="2.4" stroke-linecap="round" stroke-linejoin="round"><path d="M4 7l16 0"/><path d="M10 11l0 6"/><path d="M14 11l0 6"/><path d="M5 7l1 12a2 2 0 0 0 2 2h8a2 2 0 0 0 2 -2l1 -12"/><path d="M9 7v-3a1 1 0 0 1 1 -1h4a1 1 0 0 1 1 1v3"/></svg>
<div class="rowl" style="top:673px"></div>
<div class="tx " style="left:335.5px;top:634.40px;font-size:15px;">5</div>
<div class="tid" style="top:620.7px"></div>
<div class="tx " style="left:460.5px;top:635.25px;font-size:14px;color:#0caf60">1710396257</div>
<div class="tx " style="left:741px;top:634.74px;font-size:14.6px;">Eric</div>
<div class="tx " style="left:1003.5px;top:634.74px;font-size:14.6px;">WorkDo</div>
<div class="bdg co" style="top:628.0px;width:73px"></div>
<div class="tx " style="left:1217.5px;top:635.79px;font-size:11px;color:#fff">Pending</div>
<div class="tx " style="left:1495.5px;top:634.66px;font-size:14.7px;">7 months ago</div>
<div class="ab cg" style="left:1727px;top:626.0px"></div>
<svg class="ic" style="left:1736.5px;top:635.0px;width:13px;height:13px" viewBox="0 0 24 24" fill="none" stroke="#fff" stroke-width="2.4" stroke-linecap="round" stroke-linejoin="round"><path d="M5 12l5 5l10 -10"/></svg>
<div class="ab co" style="left:1768px;top:626.0px"></div>
<svg class="ic" style="left:1777.5px;top:635.0px;width:13px;height:13px" viewBox="0 0 24 24" fill="none" stroke="#fff" stroke-width="2.2" stroke-linecap="round" stroke-linejoin="round"><path d="M18 6l-12 12"/><path d="M6 6l12 12"/></svg>
<div class="ab cr" style="left:1809px;top:626.0px"></div>
<svg class="ic" style="left:1818.5px;top:635.0px;width:13px;height:13px" viewBox="0 0 24 24" fill="none" stroke="#fff" stroke-width="2.4" stroke-linecap="round" stroke-linejoin="round"><path d="M4 7l16 0"/><path d="M10 11l0 6"/><path d="M14 11l0 6"/><path d="M5 7l1 12a2 2 0 0 0 2 2h8a2 2 0 0 0 2 -2l1 -12"/><path d="M9 7v-3a1 1 0 0 1 1 -1h4a1 1 0 0 1 1 1v3"/></svg>
<div class="rowl" style="top:739px"></div>
<div class="tx " style="left:335.5px;top:700.40px;font-size:15px;">6</div>
<div class="tid" style="top:686.2px"></div>
<div class="tx " style="left:460.5px;top:701.25px;font-size:14px;color:#0caf60">1710396200</div>
<div class="tx " style="left:741px;top:700.74px;font-size:14.6px;">Wanda</div>
<div class="tx " style="left:1003.5px;top:700.74px;font-size:14.6px;">WorkDo</div>
<div class="bdg co" style="top:693.5px;width:73px"></div>
<div class="tx " style="left:1217.5px;top:701.79px;font-size:11px;color:#fff">Pending</div>
<div class="tx " style="left:1495.5px;top:700.66px;font-size:14.7px;">7 months ago</div>
<div class="ab cg" style="left:1727px;top:691.5px"></div>
<svg class="ic" style="left:1736.5px;top:700.5px;width:13px;height:13px" viewBox="0 0 24 24" fill="none" stroke="#fff" stroke-width="2.4" stroke-linecap="round" stroke-linejoin="round"><path d="M5 12l5 5l10 -10"/></svg>
<div class="ab co" style="left:1768px;top:691.5px"></div>
<svg class="ic" style="left:1777.5px;top:700.5px;width:13px;height:13px" viewBox="0 0 24 24" fill="none" stroke="#fff" stroke-width="2.2" stroke-linecap="round" stroke-linejoin="round"><path d="M18 6l-12 12"/><path d="M6 6l12 12"/></svg>
<div class="ab cr" style="left:1809px;top:691.5px"></div>
<svg class="ic" style="left:1818.5px;top:700.5px;width:13px;height:13px" viewBox="0 0 24 24" fill="none" stroke="#fff" stroke-width="2.4" stroke-linecap="round" stroke-linejoin="round"><path d="M4 7l16 0"/><path d="M10 11l0 6"/><path d="M14 11l0 6"/><path d="M5 7l1 12a2 2 0 0 0 2 2h8a2 2 0 0 0 2 -2l1 -12"/><path d="M9 7v-3a1 1 0 0 1 1 -1h4a1 1 0 0 1 1 1v3"/></svg>
<div class="rowl" style="top:805px"></div>
<div class="tx " style="left:335.5px;top:766.40px;font-size:15px;">7</div>
<div class="tid" style="top:752.2px"></div>
<div class="tx " style="left:460.5px;top:767.25px;font-size:14px;color:#0caf60">1710395831</div>
<div class="tx " style="left:741px;top:766.74px;font-size:14.6px;">Liam</div>
<div class="tx " style="left:1003.5px;top:766.74px;font-size:14.6px;">WorkDo</div>
<div class="bdg cr" style="top:759.5px;width:75px"></div>
<div class="tx " style="left:1217.5px;top:767.79px;font-size:11px;color:#fff">Rejected</div>
<div class="tx " style="left:1495.5px;top:766.66px;font-size:14.7px;">7 months ago</div>
<div class="ab cr" style="left:1727px;top:757.5px"></div>
<svg class="ic" style="left:1736.5px;top:766.5px;width:13px;height:13px" viewBox="0 0 24 24" fill="none" stroke="#fff" stroke-width="2.4" stroke-linecap="round" stroke-linejoin="round"><path d="M4 7l16 0"/><path d="M10 11l0 6"/><path d="M14 11l0 6"/><path d="M5 7l1 12a2 2 0 0 0 2 2h8a2 2 0 0 0 2 -2l1 -12"/><path d="M9 7v-3a1 1 0 0 1 1 -1h4a1 1 0 0 1 1 1v3"/></svg>
<div class="rowl" style="top:871px"></div>
<div class="tx " style="left:335.5px;top:831.40px;font-size:15px;">8</div>
<div class="tid" style="top:818.2px"></div>
<div class="tx " style="left:460.5px;top:832.25px;font-size:14px;color:#0caf60">1710395764</div>
<div class="tx " style="left:741px;top:831.74px;font-size:14.6px;">Megan</div>
<div class="tx " style="left:1003.5px;top:831.74px;font-size:14.6px;">WorkDo</div>
<div class="bdg co" style="top:825.5px;width:73px"></div>
<div class="tx " style="left:1217.5px;top:832.79px;font-size:11px;color:#fff">Pending</div>
<div class="tx " style="left:1495.5px;top:831.66px;font-size:14.7px;">7 months ago</div>
<div class="ab cg" style="left:1727px;top:823.5px"></div>
<svg class="ic" style="left:1736.5px;top:832.5px;width:13px;height:13px" viewBox="0 0 24 24" fill="none" stroke="#fff" stroke-width="2.4" stroke-linecap="round" stroke-linejoin="round"><path d="M5 12l5 5l10 -10"/></svg>
<div class="ab co" style="left:1768px;top:823.5px"></div>
<svg class="ic" style="left:1777.5px;top:832.5px;width:13px;height:13px" viewBox="0 0 24 24" fill="none" stroke="#fff" stroke-width="2.2" stroke-linecap="round" stroke-linejoin="round"><path d="M18 6l-12 12"/><path d="M6 6l12 12"/></svg>
<div class="ab cr" style="left:1809px;top:823.5px"></div>
<svg class="ic" style="left:1818.5px;top:832.5px;width:13px;height:13px" viewBox="0 0 24 24" fill="none" stroke="#fff" stroke-width="2.4" stroke-linecap="round" stroke-linejoin="round"><path d="M4 7l16 0"/><path d="M10 11l0 6"/><path d="M14 11l0 6"/><path d="M5 7l1 12a2 2 0 0 0 2 2h8a2 2 0 0 0 2 -2l1 -12"/><path d="M9 7v-3a1 1 0 0 1 1 -1h4a1 1 0 0 1 1 1v3"/></svg>
<div class="rowl" style="top:936px"></div>
<div class="tx " style="left:335.5px;top:897.40px;font-size:15px;">9</div>
<div class="tid" style="top:883.7px"></div>
<div class="tx " style="left:460.5px;top:898.25px;font-size:14px;color:#0caf60">1710395695</div>
<div class="tx " style="left:741px;top:897.74px;font-size:14.6px;">Jasmine</div>
<div class="tx " style="left:1003.5px;top:897.74px;font-size:14.6px;">WorkDo</div>
<div class="bdg co" style="top:891.0px;width:73px"></div>
<div class="tx " style="left:1217.5px;top:898.79px;font-size:11px;color:#fff">Pending</div>
<div class="tx " style="left:1495.5px;top:897.66px;font-size:14.7px;">7 months ago</div>
<div class="ab cg" style="left:1727px;top:889.0px"></div>
<svg class="ic" style="left:1736.5px;top:898.0px;width:13px;height:13px" viewBox="0 0 24 24" fill="none" stroke="#fff" stroke-width="2.4" stroke-linecap="round" stroke-linejoin="round"><path d="M5 12l5 5l10 -10"/></svg>
<div class="ab co" style="left:1768px;top:889.0px"></div>
<svg class="ic" style="left:1777.5px;top:898.0px;width:13px;height:13px" viewBox="0 0 24 24" fill="none" stroke="#fff" stroke-width="2.2" stroke-linecap="round" stroke-linejoin="round"><path d="M18 6l-12 12"/><path d="M6 6l12 12"/></svg>
<div class="ab cr" style="left:1809px;top:889.0px"></div>
<svg class="ic" style="left:1818.5px;top:898.0px;width:13px;height:13px" viewBox="0 0 24 24" fill="none" stroke="#fff" stroke-width="2.4" stroke-linecap="round" stroke-linejoin="round"><path d="M4 7l16 0"/><path d="M10 11l0 6"/><path d="M14 11l0 6"/><path d="M5 7l1 12a2 2 0 0 0 2 2h8a2 2 0 0 0 2 -2l1 -12"/><path d="M9 7v-3a1 1 0 0 1 1 -1h4a1 1 0 0 1 1 1v3"/></svg>
<div class="rowl" style="top:1002px"></div>
<div class="tx " style="left:335.5px;top:963.40px;font-size:15px;">10</div>
<div class="tid" style="top:949.2px"></div>
<div class="tx " style="left:460.5px;top:964.25px;font-size:14px;color:#0caf60">1710395639</div>
<div class="tx " style="left:741px;top:963.74px;font-size:14.6px;">Felicity</div>
<div class="tx " style="left:1003.5px;top:963.74px;font-size:14.6px;">WorkDo</div>
<div class="bdg co" style="top:956.5px;width:73px"></div>
<div class="tx " style="left:1217.5px;top:964.79px;font-size:11px;color:#fff">Pending</div>
<div class="tx " style="left:1495.5px;top:963.66px;font-size:14.7px;">7 months ago</div>
<div class="ab cg" style="left:1727px;top:954.5px"></div>
<svg class="ic" style="left:1736.5px;top:963.5px;width:13px;height:13px" viewBox="0 0 24 24" fill="none" stroke="#fff" stroke-width="2.4" stroke-linecap="round" stroke-linejoin="round"><path d="M5 12l5 5l10 -10"/></svg>
<div class="ab co" style="left:1768px;top:954.5px"></div>
<svg class="ic" style="left:1777.5px;top:963.5px;width:13px;height:13px" viewBox="0 0 24 24" fill="none" stroke="#fff" stroke-width="2.2" stroke-linecap="round" stroke-linejoin="round"><path d="M18 6l-12 12"/><path d="M6 6l12 12"/></svg>
<div class="ab cr" style="left:1809px;top:954.5px"></div>
<svg class="ic" style="left:1818.5px;top:963.5px;width:13px;height:13px" viewBox="0 0 24 24" fill="none" stroke="#fff" stroke-width="2.4" stroke-linecap="round" stroke-linejoin="round"><path d="M4 7l16 0"/><path d="M10 11l0 6"/><path d="M14 11l0 6"/><path d="M5 7l1 12a2 2 0 0 0 2 2h8a2 2 0 0 0 2 -2l1 -12"/><path d="M9 7v-3a1 1 0 0 1 1 -1h4a1 1 0 0 1 1 1v3"/></svg>
<div class="tx " style="left:310.5px;top:1050.24px;font-size:14.6px;">Showing 1 to 10 of 11 entries</div>
<div class="bx" style="left:1713px;top:1036px;width:152px;height:38px;border:1px solid #dee2e6;border-radius:9px;overflow:hidden"><div style="position:absolute;left:41px;top:-1px;width:35px;height:38px;background:#0caf60"></div><div style="position:absolute;left:109px;top:0;width:1px;height:36px;background:#dee2e6"></div></div>
<svg class="ic" style="left:1731px;top:1050px;width:7px;height:11px" viewBox="0 0 7 11"><path d="M5.5 1.2l-4.3 4.3 4.3 4.3" fill="none" stroke="#51459d" stroke-width="1.3"/></svg>
<div class="tx " style="left:1768px;top:1048.30px;font-size:15px;color:#fff">1</div>
<div class="tx " style="left:1801.5px;top:1048.30px;font-size:15px;color:#51459d">2</div>
<svg class="ic" style="left:1841px;top:1050px;width:7px;height:11px" viewBox="0 0 7 11"><path d="M1.5 1.2l4.3 4.3-4.3 4.3" fill="none" stroke="#51459d" stroke-width="1.3"/></svg>
</body></html>
